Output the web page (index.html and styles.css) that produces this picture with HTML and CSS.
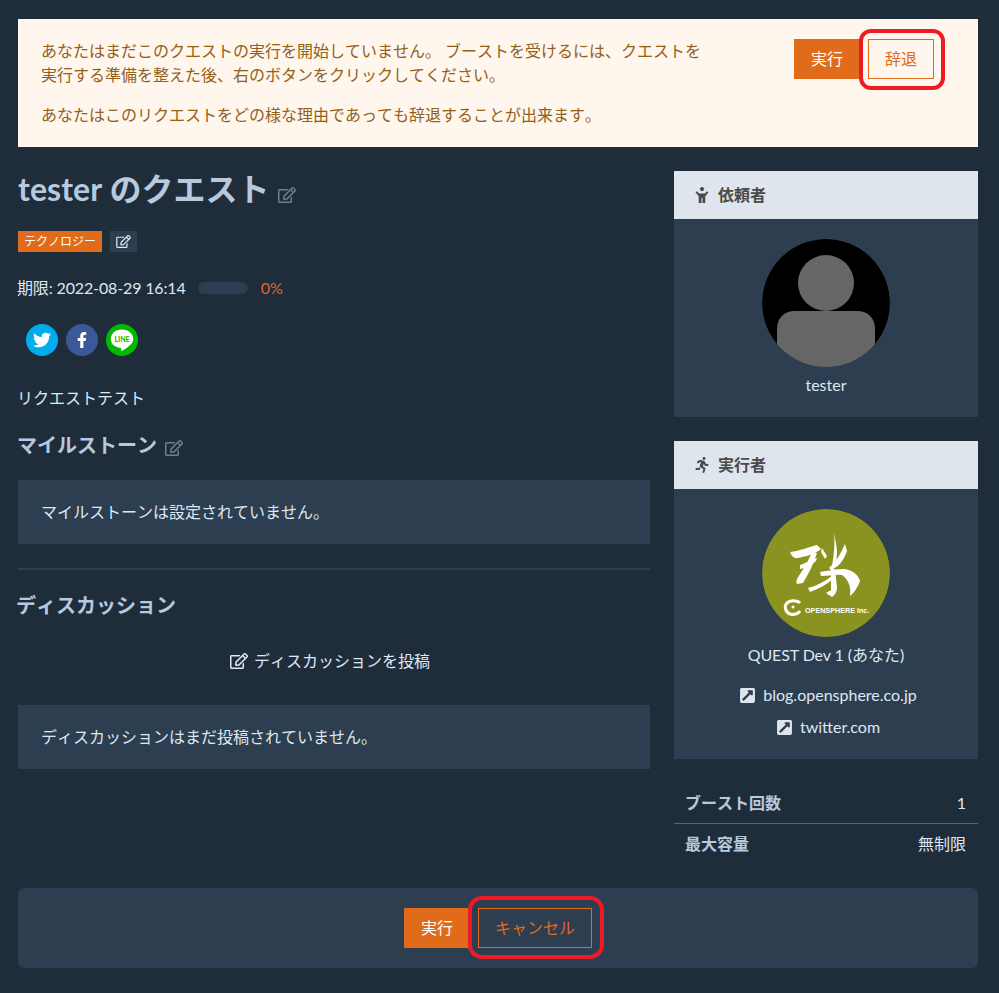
FILE: index.html
```html
<!DOCTYPE html>
<html lang="ja">
<head>
<meta charset="utf-8">
<title>tester のクエスト</title>
<link rel="stylesheet" href="styles.css">
</head>
<body>
<svg class="defs" width="0" height="0" aria-hidden="true">
  <symbol id="edit" viewBox="0 0 576 512"><path d="M402.3 344.900l32-32c5-5 13.700-1.500 13.700 5.700V464c0 26.500-21.500 48-48 48H48c-26.500 0-48-21.500-48-48V112c0-26.500 21.500-48 48-48h273.500c7.100 0 10.700 8.600 5.700 13.700l-32 32c-1.500 1.500-3.500 2.300-5.700 2.300H48v352h352V350.500c0-2.100.8-4.100 2.300-5.600zm156.600-201.800L296.300 405.700l-90.400 10c-26.200 2.900-48.500-19.200-45.600-45.600l10-90.400L432.900 17.100c22.900-22.900 59.900-22.900 82.700 0l43.200 43.200c22.900 22.900 22.900 60 .1 82.800zM460.100 174L402 115.900 216.200 301.800l-7.300 65.300 65.300-7.300L460.100 174zm64.800-79.700l-43.200-43.200c-4.100-4.100-10.800-4.100-14.800 0L436 82l58.100 58.100 30.900-30.900c4-4.200 4-10.800-.1-14.900z"/></symbol>
  <symbol id="extlink" viewBox="0 0 448 512"><path d="M448 80v352c0 26.51-21.49 48-48 48H48c-26.51 0-48-21.49-48-48V80c0-26.51 21.49-48 48-48h352c26.51 0 48 21.49 48 48zm-88 16H248.029c-21.313 0-32.08 25.861-16.971 40.971l31.984 31.987L67.515 364.485c-4.686 4.686-4.686 12.284 0 16.971l31.029 31.029c4.687 4.686 12.285 4.686 16.971 0l195.526-195.526 31.988 31.991C357.058 263.977 384 253.425 384 231.979V120c0-13.255-10.745-24-24-24z"/></symbol>
</svg>
<main class="page">
  <section class="notice">
    <div class="notice-text">
      <p>あなたはまだこのクエストの実行を開始していません。 ブーストを受けるには、クエストを実行する準備を整えた後、右のボタンをクリックしてください。</p>
      <p>あなたはこのリクエストをどの様な理由であっても辞退することが出来ます。</p>
    </div>
    <div class="buttons notice-buttons">
      <a class="btn btn-solid">実行</a>
      <span class="marked marked-small"><a class="btn btn-outline">辞退</a></span>
    </div>
  </section>

  <div class="columns">
    <div class="col-main">
      <h1 class="title"><span class="latin title-latin">tester </span>のクエスト<svg class="icon-edit-title"><use href="#edit"/></svg></h1>
      <div class="tags">
        <span class="tag tag-orange">テクノロジー</span>
        <span class="tag tag-dark"><svg class="icon-edit-tag"><use href="#edit"/></svg></span>
      </div>
      <div class="deadline">
        <span class="deadline-text">期限: <span class="latin">2022-08-29 16:14</span></span>
        <span class="progress"></span>
        <span class="percent">0%</span>
      </div>
      <div class="social">
        <a class="social-btn twitter"><svg viewBox="0 0 512 512"><path d="M459.37 151.716c.325 4.548.325 9.097.325 13.645 0 138.72-105.583 298.558-298.558 298.558-59.452 0-114.68-17.219-161.137-47.106 8.447.974 16.568 1.299 25.34 1.299 49.055 0 94.213-16.568 130.274-44.832-46.132-.975-84.792-31.188-98.112-72.772 6.498.974 12.995 1.624 19.818 1.624 9.421 0 18.843-1.3 27.614-3.573-48.081-9.747-84.143-51.98-84.143-102.985v-1.299c13.969 7.797 30.214 12.67 47.431 13.319-28.264-18.843-46.781-51.005-46.781-87.391 0-19.492 5.197-37.36 14.294-52.954 51.655 63.675 129.3 105.258 216.365 109.807-1.624-7.797-2.599-15.918-2.599-24.04 0-57.828 46.782-104.934 104.934-104.934 30.213 0 57.502 12.67 76.67 33.137 23.715-4.548 46.456-13.32 66.599-25.34-7.798 24.366-24.366 44.833-46.132 57.827 21.117-2.273 41.584-8.122 60.426-16.243-14.292 20.791-32.161 39.308-52.628 54.253z"/></svg></a>
        <a class="social-btn facebook"><svg viewBox="0 0 320 512"><path d="M279.14 288l14.22-92.66h-88.91v-60.13c0-25.35 12.42-50.06 52.24-50.06h40.42V6.26S260.43 0 225.36 0c-73.22 0-121.08 44.38-121.08 124.72v70.62H22.89V288h81.39v224h100.17V288z"/></svg></a>
        <a class="social-btn line"><svg viewBox="0 0 32 32"><path d="M16 5.500C9.400 5.500 4.800 9.700 4.800 14.900c0 4.600 3.800 8.100 9.300 8.900.5.100 1 .3 1.100.7.100.4 0 .9 0 1.300-.1.600-.2 1.400.8 1 2.600-1.300 6.800-4.200 9-6.600 1.500-1.600 2.200-3.400 2.200-5.300 0-5.200-4.800-9.400-11.200-9.400z"/><text class="line-text" x="16" y="17.500" text-anchor="middle">LINE</text></svg></a>
      </div>
      <p class="desc">リクエストテスト</p>
      <h2 class="subtitle">マイルストーン<svg class="icon-edit-sub"><use href="#edit"/></svg></h2>
      <div class="panel-box">マイルストーンは設定されていません。</div>
      <hr class="divider">
      <h2 class="subtitle subtitle-discussion">ディスカッション</h2>
      <a class="post-link"><svg class="icon-edit-post"><use href="#edit"/></svg><span>ディスカッションを投稿</span></a>
      <div class="panel-box panel-discussion">ディスカッションはまだ投稿されていません。</div>
    </div>

    <aside class="col-side">
      <section class="card">
        <header class="card-head">
          <svg class="head-icon" viewBox="0 0 13 16"><circle cx="6.500" cy="2.100" r="2.100"/><path d="M0 5.200L1.300 4.300 3.800 6.600H9.200L11.700 4.300 13 5.200 9.800 9.200V16H7V11H6V16H3.200V9.200z"/></svg>
          <span>依頼者</span>
        </header>
        <div class="card-body">
          <svg class="avatar" viewBox="0 0 128 128"><circle cx="64" cy="64" r="64" fill="#000"/><g fill="#666"><circle cx="64" cy="44" r="28"/><path d="M15 128V90c0-11 7-18 18-18h62c11 0 18 7 18 18v38z"/></g></svg>
          <div class="name">tester</div>
        </div>
      </section>

      <section class="card">
        <header class="card-head">
          <svg class="head-icon" viewBox="0 0 416 512"><path d="M272 96c26.51 0 48-21.49 48-48S298.51 0 272 0s-48 21.49-48 48 21.49 48 48 48zM113.69 317.47l-14.8 34.52H32c-17.67 0-32 14.33-32 32s14.33 32 32 32h77.45c19.25 0 36.58-11.44 44.11-29.09l8.79-20.52-10.67-6.3c-17.32-10.23-30.06-25.37-37.99-42.61zM384 223.99h-44.03l-26.06-53.25c-12.5-25.55-35.45-44.23-61.78-50.94l-71.08-21.14c-28.3-6.8-57.77-.55-80.84 17.14l-39.67 30.41c-14.03 10.75-16.69 30.83-5.92 44.86s30.84 16.66 44.86 5.92l39.69-30.41c7.67-5.89 17.44-8 25.27-6.14l14.7 4.37-37.46 87.39c-12.62 29.48-1.31 64.01 26.3 80.31l84.98 50.17-27.47 87.73c-5.28 16.86 4.11 34.81 20.97 40.09 3.19 1 6.41 1.48 9.58 1.48 13.61 0 26.23-8.77 30.52-22.45l31.64-101.06c5.91-20.77-2.89-43.08-21.64-54.39l-61.24-36.14 31.31-78.28 20.27 41.43c8 16.34 24.92 26.89 43.11 26.89H384c17.67 0 32-14.33 32-32s-14.33-31.99-32-31.99z"/></svg>
          <span>実行者</span>
        </header>
        <div class="card-body">
          <svg class="avatar" viewBox="0 0 128 128">
            <circle cx="64" cy="64" r="64" fill="#8a931f"/>
            <g fill="#fff">
              <path d="M28 43C38 42 47 38 55 36L59 40C56 43 50 45 45 47L40 48C34 50 31 50 28 43Z"/>
              <path d="M50 43L55 44C52 54 47 64 41 74L35 75C33 71 37 67 40 62C44 56 47 50 50 43Z"/>
              <path d="M38 56C44 54 50 50 55 49L54 52C50 55 46 58 43 59L38 60Z"/>
              <path d="M72 24C73 31 75 37 75 43L74 58L70 57C72 46 73 35 72 24Z"/>
              <path d="M83 35L85 42C83 48 80 53 76 57L69 61L67 59C74 53 79 44 83 35Z"/>
              <path d="M60 39L65 47L63 50L59 43Z"/>
              <path d="M46 79C54 77 62 73 70 67L71 70C64 76 56 80 48 83Z"/>
              <path d="M69 60L73 60L75 78C75 83 73 86 70 88L64 84L69 81Z"/>
              <path d="M58 63C66 62 74 60 82 60C90 61 96 65 98 72C96 78 92 84 88 87C89 80 88 72 80 66C74 65 66 67 59 67Z"/>
            </g>
            <path d="M38 94C35 91 28 91 25 94C22 97 23 103 28 105C32 106 36 105 38 102" fill="none" stroke="#fff" stroke-width="3"/>
            <circle cx="31" cy="98" r="1.500" fill="#fff"/>
            <text class="logo-text" x="43" y="104">OPENSPHERE Inc.</text>
          </svg>
          <div class="name"><span class="latin name-latin">QUEST Dev 1 </span>(あなた)</div>
          <ul class="links">
            <li><a class="latin"><svg class="icon-ext"><use href="#extlink"/></svg>blog.opensphere.co.jp</a></li>
            <li><a class="latin"><svg class="icon-ext"><use href="#extlink"/></svg>twitter.com</a></li>
          </ul>
        </div>
      </section>

      <dl class="stats">
        <div class="stat stat-first"><dt>ブースト回数</dt><dd>1</dd></div>
        <div class="stat"><dt>最大容量</dt><dd>無制限</dd></div>
      </dl>
    </aside>
  </div>

  <section class="footer-bar">
    <div class="buttons footer-buttons">
      <a class="btn btn-solid">実行</a>
      <span class="marked marked-wide"><a class="btn btn-outline btn-cancel">キャンセル</a></span>
    </div>
  </section>
</main>
</body>
</html>
```
FILE: styles.css
```css
* { box-sizing: border-box; }
html, body { margin: 0; padding: 0; }
body {
  background: #1f2d3b;
  color: #dfe8f2;
  font-family: "Lato", "Noto Sans CJK JP", sans-serif;
  font-size: 16px;
  line-height: 24px;
  font-kerning: none;
  text-spacing-trim: space-all;
}
.latin { font-kerning: normal; }
.defs { position: absolute; }
.page { width: 960px; margin-left: 18px; padding-top: 19px; }
p { margin: 0; }

.notice {
  height: 128px;
  padding: 20px 44px 20px 23px;
  display: flex;
  align-items: flex-start;
  justify-content: space-between;
  background: #fff6ed;
  color: #946017;
}
.notice-text { width: 668px; }
.notice-text p + p { margin-top: 16px; }

.buttons { display: flex; }
.btn {
  display: block;
  width: 66px;
  height: 40px;
  padding: 7px 15px;
  border: 1px solid #e06c1b;
  line-height: 24px;
  text-align: center;
  white-space: nowrap;
}
.btn-solid { margin-right: 8px; background: #e06c1b; color: #fff; }
.btn-outline { color: #e06c1b; }
.btn-cancel { width: 114px; }

.marked { position: relative; display: block; }
.marked::after {
  content: "";
  position: absolute;
  border: 4px solid #ed1c24;
  border-radius: 12px;
}
.marked-small::after { left: -9px; right: -11px; top: -10px; bottom: -11px; }
.marked-wide::after { left: -10px; right: -12px; top: -12px; bottom: -11px; border-radius: 14px; }

.columns { display: flex; justify-content: space-between; margin-top: 24px; }
.col-main { width: 632px; }
.col-side { width: 304px; }

.title {
  margin: 0;
  height: 36px;
  font-size: 32px;
  line-height: 36px;
  font-weight: 700;
  color: #b6c9de;
  white-space: nowrap;
}
.title-latin { letter-spacing: .1px; }
.icon-edit-title { width: 18px; height: 16px; margin-left: 8px; fill: #6c7e94; vertical-align: -2px; }
.tags { display: flex; gap: 8px; margin-top: 24px; }
.tag { display: flex; align-items: center; height: 21px; font-size: 12px; line-height: 21px; }
.tag-orange { padding: 0 6px; background: #e06c1b; color: #fff; }
.tag-dark { width: 27px; justify-content: center; background: #2c3e50; }
.icon-edit-tag { width: 15px; height: 13px; fill: #dfe8f2; }

.deadline { display: flex; align-items: center; margin-top: 24px; height: 24px; color: #dfe8f2; }
.deadline-text { letter-spacing: -.14px; margin-left: -1px; }
.progress { width: 50px; height: 12px; margin-left: 12px; border-radius: 6px; background: #2c3e50; }
.percent { margin-left: 13px; color: #e0642a; }

.social { display: flex; gap: 8px; margin-top: 24px; padding-left: 8px; }
.social-btn { display: flex; align-items: center; justify-content: center; width: 32px; height: 32px; border-radius: 50%; }
.social-btn svg { fill: #fff; }
.twitter { background: #00aced; }
.twitter svg { width: 18px; height: 18px; }
.facebook { background: #3b5998; }
.facebook svg { width: 10px; height: 16px; }
.line { background: #00b900; }
.line svg { width: 32px; height: 32px; }
.line-text { font: 700 7px "Lato", sans-serif; fill: #00b900; }

.desc { margin-top: 30px; height: 24px; margin-left: -1px; }
.subtitle {
  margin: 23px 0 0 -1px;
  height: 24px;
  font-size: 20px;
  line-height: 24px;
  font-weight: 700;
  color: #b6c9de;
  white-space: nowrap;
}
.icon-edit-sub { width: 18px; height: 16px; margin-left: 8px; fill: #6c7e94; vertical-align: -3px; }
.panel-box { height: 64px; margin-top: 23px; padding: 20px 23px; background: #2c3e50; }
.divider { height: 2px; margin: 24px 0 0; border: 0; background: #2c3e50; }
.subtitle-discussion { margin-top: 23px; margin-left: -2px; }
.post-link { display: flex; align-items: center; justify-content: center; gap: 6px; margin-top: 32px; height: 24px; padding-right: 8px; }
.icon-edit-post { width: 18px; height: 16px; fill: #dfe8f2; }
.panel-discussion { margin-top: 32px; padding-left: 23px; }

.card { background: #2c3e50; margin-bottom: 24px; }
.card-head {
  display: flex;
  align-items: center;
  gap: 9px;
  height: 48px;
  padding-left: 21px;
  background: #dee5ed;
  color: #4a4a4a;
  font-weight: 700;
}
.head-icon { width: 14px; height: 16px; fill: #4a4a4a; }
.card-body { display: flex; flex-direction: column; align-items: center; padding: 20px 0 20px; }
.avatar { width: 128px; height: 128px; display: block; border-radius: 50%; }
.name { margin-top: 6px; }
.name-latin { letter-spacing: -.1px; }
.logo-text { font: 700 7.200px "Liberation Sans", sans-serif; fill: #fff; }
.links { list-style: none; margin: 16px 0 0; padding: 0 0 0 5px; text-align: center; }
.links li { height: 24px; }
.links li + li { margin-top: 8px; }
.links a { display: flex; align-items: center; justify-content: center; gap: 8px; }
.icon-ext { width: 15px; height: 17px; fill: #dee5ed; }

.stats { margin: 0; }
.stat { display: flex; justify-content: space-between; padding: 8px 12px 8px 11px; height: 41px; }
.stat-first { border-bottom: 1px solid #55657a; }
.stat dt { font-weight: 700; color: #b6c9de; }
.stat dd { margin: 0; }

.footer-bar {
  height: 80px;
  margin-top: 23px;
  padding-top: 20px;
  border-radius: 6px;
  background: #2c3e50;
}
.footer-buttons { justify-content: center; }
```
